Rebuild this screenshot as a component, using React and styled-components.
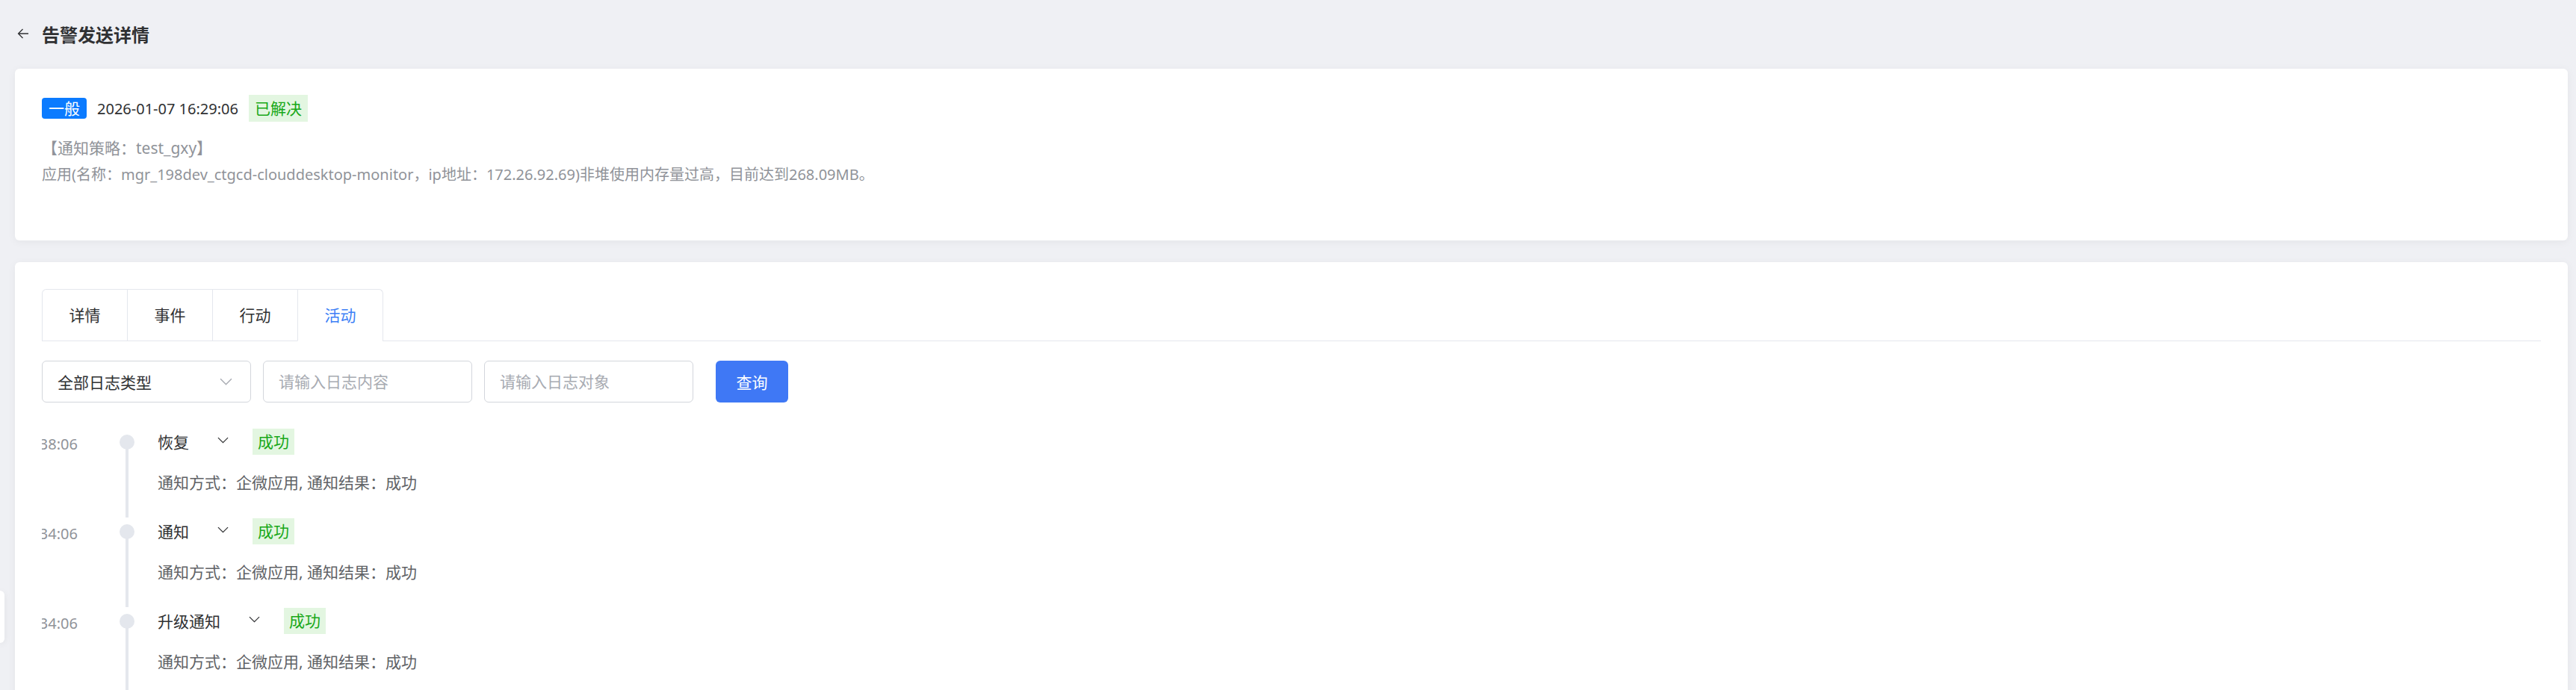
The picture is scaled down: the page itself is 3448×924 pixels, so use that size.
import React from "react";
import styled, { createGlobalStyle } from "styled-components";

const GlobalStyle = createGlobalStyle`
  html, body {
    margin: 0;
    padding: 0;
  }
  body {
    background: #eff0f4;
    font-family: "Noto Sans", "Noto Sans CJK SC", sans-serif;
    color: #303133;
  }
  * {
    box-sizing: border-box;
  }
`;

const tabs = ["详情", "事件", "行动", "活动"];

const logs = [
  { time: "2026-01-07 16:38:06", title: "恢复", status: "成功", detail: "通知方式：企微应用, 通知结果：成功" },
  { time: "2026-01-07 16:34:06", title: "通知", status: "成功", detail: "通知方式：企微应用, 通知结果：成功" },
  { time: "2026-01-07 16:34:06", title: "升级通知", status: "成功", detail: "通知方式：企微应用, 通知结果：成功" },
  { time: "2026-01-07 16:29:06", title: "通知", status: "成功", detail: "通知方式：企微应用, 通知结果：成功" },
  { time: "2026-01-07 16:29:06", title: "告警", status: "成功", detail: "通知方式：企微应用, 通知结果：成功" },
];

const BackArrow = () => (
  <svg width="16" height="16" viewBox="0 0 16 16" fill="none">
    <path d="M15 8H1.5M7.5 2L1.5 8l6 6" stroke="#303133" strokeWidth="1.3" />
  </svg>
);

const Chevron = ({ color = "#303133", w = 15 }) => (
  <svg width={w} height={w * 0.6} viewBox="0 0 16 9.6" fill="none">
    <path d="M1 1.2l7 7 7-7" stroke={color} strokeWidth="1.3" />
  </svg>
);

const App = () => {
  return (
    <Page>
      <GlobalStyle />
      <Header>
        <BackButton>
          <BackArrow />
        </BackButton>
        <Title>告警发送详情</Title>
      </Header>

      <SummaryCard>
        <MetaRow>
          <LevelBadge>一般</LevelBadge>
          <DateText>2026-01-07 16:29:06</DateText>
          <StatusTag>已解决</StatusTag>
        </MetaRow>
        <InfoLine first>【通知策略：test_gxy】</InfoLine>
        <InfoLine>
          应用(名称：mgr_198dev_ctgcd-clouddesktop-monitor，ip地址：172.26.92.69)非堆使用内存量过高，目前达到268.09MB。
        </InfoLine>
      </SummaryCard>

      <DetailCard>
        <TabsHeader>
          <TabsNav>
            {tabs.map((t, i) => (
              <TabItem key={t} active={i === 3} first={i === 0}>
                {t}
              </TabItem>
            ))}
          </TabsNav>
        </TabsHeader>

        <FilterBar>
          <SelectBox>
            <span>全部日志类型</span>
            <Chevron color="#a8abb2" w={17} />
          </SelectBox>
          <TextInput placeholder="请输入日志内容" />
          <TextInput placeholder="请输入日志对象" />
          <QueryButton>查询</QueryButton>
        </FilterBar>

        <Timeline>
          {logs.map((log, i) => (
            <LogItem key={i}>
              <TimeLabel>
                <span>{log.time}</span>
              </TimeLabel>
              <Axis>
                <Dot />
              </Axis>
              <LogBody>
                <LogHead>
                  <LogTitle>{log.title}</LogTitle>
                  <Toggle>
                    <Chevron />
                  </Toggle>
                  <StatusTag small>{log.status}</StatusTag>
                </LogHead>
                <LogDetail>{log.detail}</LogDetail>
              </LogBody>
            </LogItem>
          ))}
        </Timeline>
      </DetailCard>

      <SideHandle />
    </Page>
  );
};

export default App;

const Page = styled.div`
  height: 100vh;
  overflow: hidden;
  padding: 0 11px 0 20px;
`;

const Header = styled.div`
  height: 92px;
  display: flex;
  align-items: center;
  padding-left: 3px;
  padding-bottom: 2px;
`;

const BackButton = styled.div`
  display: flex;
  align-items: center;
  cursor: pointer;
`;

const Title = styled.h1`
  margin: 0 0 0 17px;
  font-size: 24px;
  font-weight: 700;
  color: #303133;
`;

const Card = styled.div`
  background: #fff;
  border-radius: 6px;
  box-shadow: 0 2px 12px rgba(0, 0, 0, 0.05);
`;

const SummaryCard = styled(Card)`
  height: 230px;
  padding: 35px 36px;
`;

const MetaRow = styled.div`
  display: flex;
  align-items: center;
  height: 36px;
  gap: 14px;
`;

const LevelBadge = styled.span`
  height: 28px;
  line-height: 28px;
  padding: 0 9px;
  border-radius: 4px;
  background: #0b7bff;
  color: #fff;
  font-size: 21px;
`;

const DateText = styled.span`
  font-size: 20px;
  color: #303133;
`;

const StatusTag = styled.span`
  height: ${(p) => (p.small ? "35px" : "36px")};
  line-height: ${(p) => (p.small ? "35px" : "36px")};
  padding: 0 ${(p) => (p.small ? "7px" : "8px")};
  background: #e3f6e1;
  color: #18a818;
  font-size: 21px;
`;

const InfoLine = styled.div`
  margin-top: ${(p) => (p.first ? "17px" : "0")};
  line-height: 36px;
  font-size: ${(p) => (p.first ? "21px" : "20px")};
  color: #909399;
  white-space: nowrap;
`;

const DetailCard = styled(Card)`
  margin-top: 29px;
  padding: 36px;
  min-height: 800px;
`;

const TabsHeader = styled.div`
  border-bottom: 1px solid #e4e7ed;
`;

const TabsNav = styled.div`
  display: inline-flex;
  border: 1px solid #e4e7ed;
  border-bottom: none;
  border-radius: 6px 6px 0 0;
  margin-bottom: -1px;
`;

const TabItem = styled.div`
  height: 69px;
  line-height: 68px;
  font-size: 21px;
  color: ${(p) => (p.active ? "#3d7ff6" : "#303133")};
  border-left: ${(p) => (p.first ? "none" : "1px solid #e4e7ed")};
  border-bottom: 1px solid ${(p) => (p.active ? "#fff" : "transparent")};
  width: ${(p) => (p.first ? "113px" : "114px")};
  text-align: center;
  cursor: pointer;
`;

const FilterBar = styled.div`
  display: flex;
  align-items: center;
  margin-top: 26px;
  gap: 16px;
`;

const fieldStyle = `
  width: 280px;
  height: 56px;
  border: 1px solid #d3d6dc;
  border-radius: 6px;
  padding: 0 20px;
  font-size: 21px;
  font-family: "Noto Sans", "Noto Sans CJK SC", sans-serif;
  background: #fff;
`;

const SelectBox = styled.div`
  ${fieldStyle}
  display: flex;
  align-items: center;
  justify-content: space-between;
  padding-right: 24px;
  color: #303133;
`;

const TextInput = styled.input`
  ${fieldStyle}
  outline: none;
  color: #303133;
  &::placeholder {
    color: #a8abb2;
  }
`;

const QueryButton = styled.button`
  margin-left: 14px;
  width: 97px;
  height: 56px;
  border: none;
  border-radius: 6px;
  background: #3f78f5;
  color: #fff;
  font-size: 21px;
  font-family: "Noto Sans", "Noto Sans CJK SC", sans-serif;
  cursor: pointer;
`;

const Timeline = styled.div`
  margin-top: 34px;
  display: flex;
  flex-direction: column;
`;

const LogItem = styled.div`
  display: grid;
  grid-template-columns: 48px 20px 1fr;
  column-gap: 56px;
  height: 120px;
  & > :last-child {
    margin-left: -25px;
  }
`;

const TimeLabel = styled.div`
  display: flex;
  justify-content: flex-end;
  overflow: hidden;
  white-space: nowrap;
  height: 36px;
  padding-top: 8px;
  line-height: 28px;
  font-size: 20px;
  color: #909399;
`;

const Axis = styled.div`
  position: relative;
  display: flex;
  justify-content: center;
  &::before {
    content: "";
    position: absolute;
    top: 18px;
    bottom: 0;
    left: 8px;
    width: 4px;
    background: #e4e7ed;
  }
`;

const Dot = styled.div`
  position: relative;
  margin-top: 9px;
  width: 20px;
  height: 20px;
  border-radius: 50%;
  background: #e4e7ed;
`;

const LogBody = styled.div`
  display: flex;
  flex-direction: column;
`;

const LogHead = styled.div`
  display: flex;
  align-items: center;
  height: 36px;
`;

const LogTitle = styled.span`
  font-size: 21px;
  color: #303133;
`;

const Toggle = styled.span`
  display: flex;
  align-items: center;
  margin: -4px 32px 0 38px;
  cursor: pointer;
`;

const LogDetail = styled.div`
  margin-top: 23px;
  line-height: 28px;
  font-size: 21px;
  color: #606266;
`;

const SideHandle = styled.div`
  position: fixed;
  left: 0;
  top: 791px;
  width: 6px;
  height: 70px;
  background: #fff;
  border-radius: 0 8px 8px 0;
  box-shadow: 0 2px 10px rgba(0, 0, 0, 0.08);
`;
